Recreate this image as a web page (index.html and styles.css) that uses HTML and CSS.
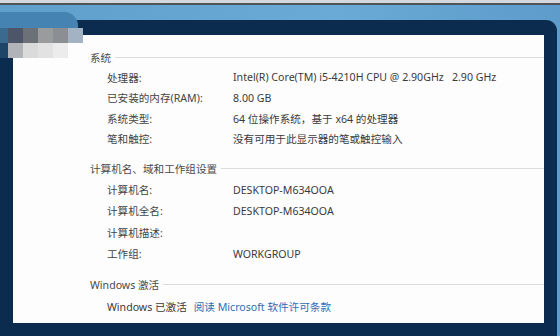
FILE: index.html
```html
<!DOCTYPE html>
<html lang="zh-CN">
<head>
  <meta charset="UTF-8" />
  <title>系统</title>
  <link rel="stylesheet" href="styles.css">
</head>
<body>
  <div class="screen">
    <div class="sky"></div>
    <div class="blur-tab"></div>
    <div class="mosaic">
      <span style="background:#3a6a8e"></span><span style="background:#4c5668"></span><span style="background:#6c7077"></span><span style="background:#9a9b9c"></span><span style="background:#8b8e92"></span><span style="background:#a3b3c3"></span>
      <span style="background:#1e4468"></span><span style="background:#b0b4b8"></span><span style="background:#dadada"></span><span style="background:#e2e2e2"></span><span style="background:#ececec"></span><span style="background:transparent"></span>
    </div>
    <div class="frame">
      <div class="panel">
        <div class="section-title">系统</div>
        <div class="group">
          <div class="row"><span class="label">处理器:</span><span>Intel(R) Core(TM) i5-4210H CPU @ 2.90GHz&nbsp;&nbsp;&nbsp;2.90 GHz</span></div>
          <div class="row"><span class="label">已安装的内存(RAM):</span><span>8.00 GB</span></div>
          <div class="row"><span class="label">系统类型:</span><span>64 位操作系统，基于 x64 的处理器</span></div>
          <div class="row"><span class="label">笔和触控:</span><span>没有可用于此显示器的笔或触控输入</span></div>
        </div>

        <div class="section-title second">计算机名、域和工作组设置</div>
        <div class="group tall">
          <div class="row"><span class="label">计算机名:</span><span>DESKTOP-M634OOA</span></div>
          <div class="row"><span class="label">计算机全名:</span><span>DESKTOP-M634OOA</span></div>
          <div class="row"><span class="label">计算机描述:</span><span></span></div>
          <div class="row"><span class="label">工作组:</span><span>WORKGROUP</span></div>
        </div>

        <div class="section-title third">Windows 激活</div>
        <div class="row activation"><span>Windows 已激活</span><a href="#" class="link">阅读 Microsoft 软件许可条款</a></div>
      </div>
    </div>
  </div>
</body>
</html>
```

FILE: styles.css
```css
body {
  margin: 0;
  font-family: "Noto Sans", "Noto Sans CJK SC", sans-serif;
  background-color: #5a9dcb;
}

.screen {
  position: relative;
  width: 560px;
  height: 336px;
  overflow: hidden;
  background: linear-gradient(90deg, #5f9fcc, #6aaad6 60%, #5d9ccb);
  border-top: 3px solid #d4d8dc;
  box-sizing: border-box;
}

.sky {
  height: 15px;
  border-top: 2px solid #505458;
}

/* blurred window tab in the top-left corner */
.blur-tab {
  position: absolute;
  top: 9px;
  left: 0;
  width: 78px;
  height: 16px;
  background-color: #4584b2;
  border-top-right-radius: 14px;
}

.mosaic {
  position: absolute;
  top: 25px;
  left: 0;
  display: grid;
  grid-template-columns: 8px repeat(5, 15px);
  grid-auto-rows: 15px;
}

.frame {
  width: 557px;
  height: 316px;
  box-sizing: border-box;
  background-color: #0c2c4f;
  border-top-right-radius: 11px;
  padding: 15px 13px 13px 13px;
}

.panel {
  background-color: #fdfdfd;
  height: 288px;
  padding-left: 77px;
  font-size: 10.6px;
  color: #3a3a3a;
  box-sizing: border-box;
  padding-top: 12px;
}

.section-title {
  display: flex;
  align-items: center;
  height: 20px;
  color: #4a4a4a;
}

.section-title::after {
  content: "";
  flex: 1;
  height: 1px;
  margin-left: 4px;
  background-color: #dcdcdc;
}

.section-title.second {
  margin-top: 9px;
}

.section-title.third {
  margin-top: 10px;
}

.row {
  display: flex;
  align-items: center;
  height: 20.5px;
  padding-left: 17px;
}

.group.tall {
  padding-top: 1px;
}

.group.tall .row {
  height: 21.3px;
}

.label {
  width: 126px;
  color: #444;
}

.activation {
  margin-top: 2px;
  gap: 7px;
}

.link {
  color: #2e6db5;
  text-decoration: none;
}
```
